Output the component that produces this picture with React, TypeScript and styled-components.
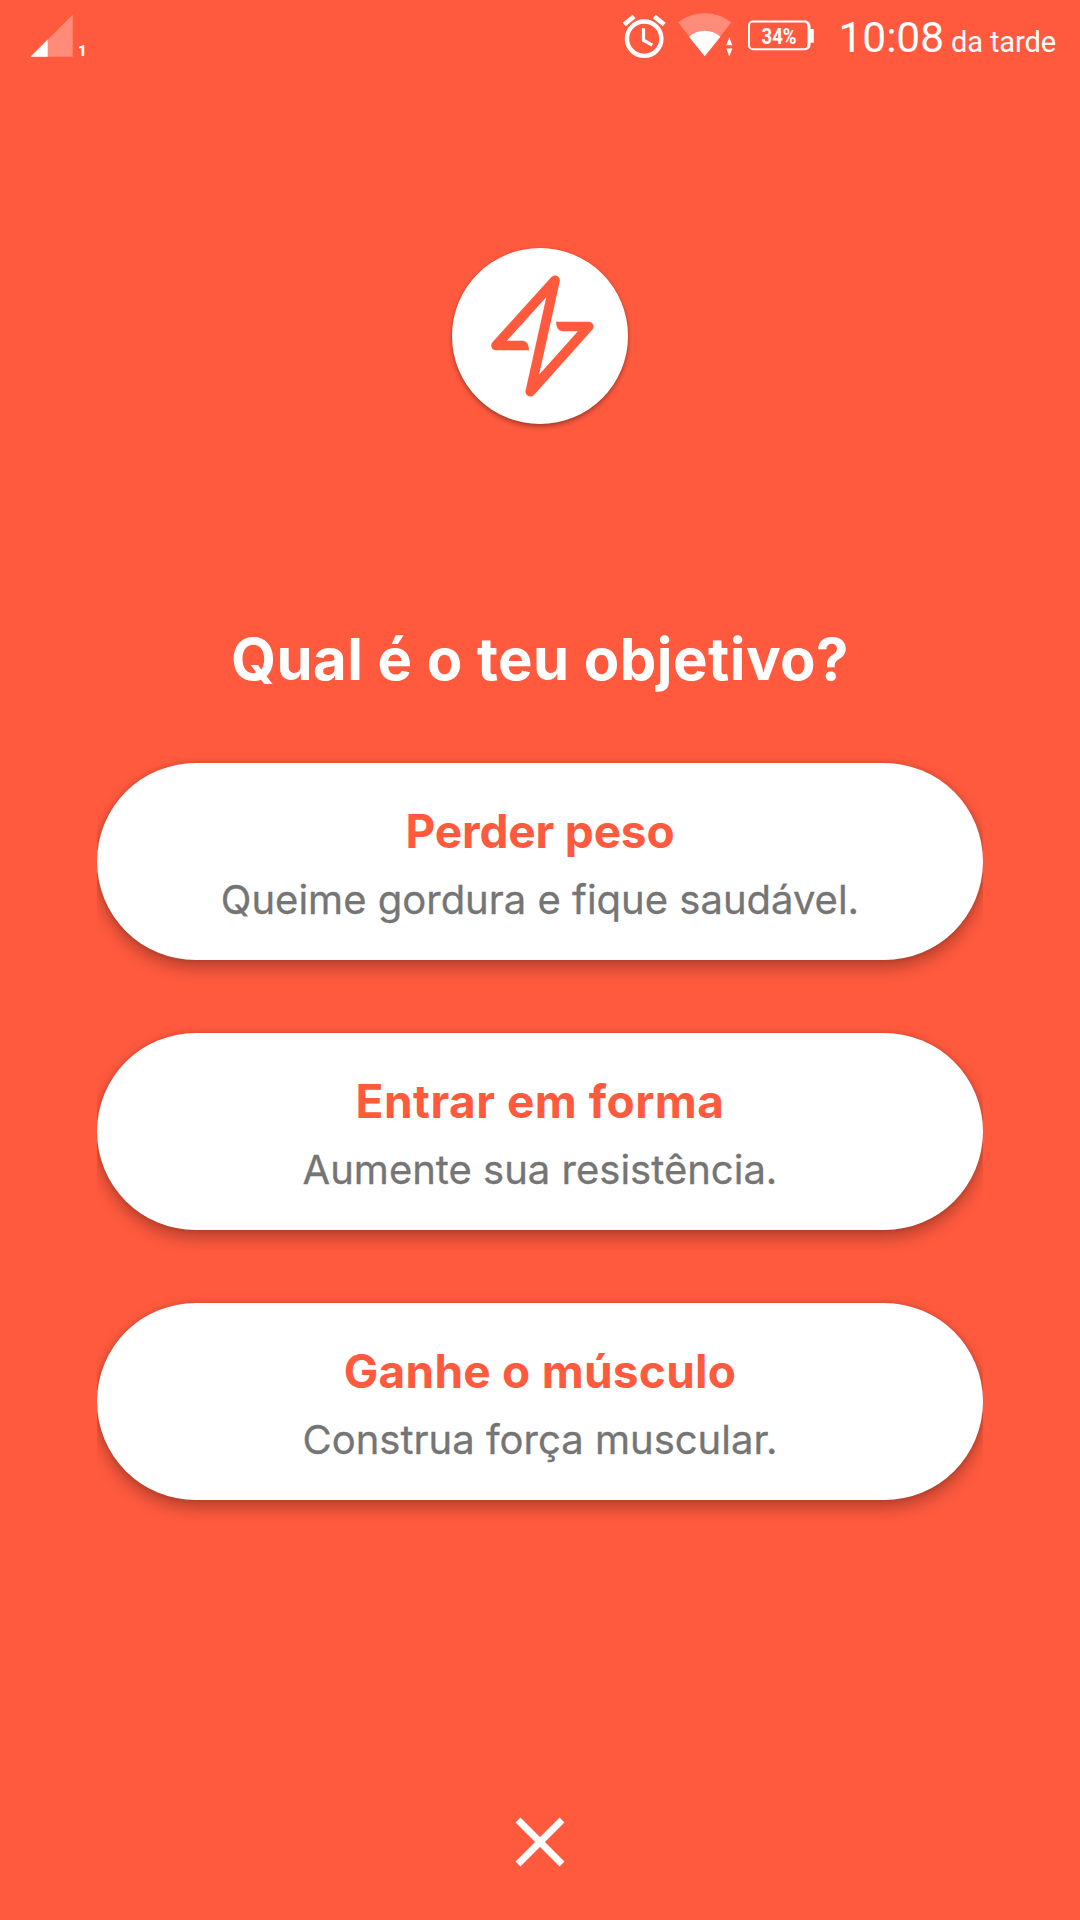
import React from 'react';
import styled, { createGlobalStyle } from 'styled-components';

const CORAL = '#ff5a3e';

const GlobalStyle = createGlobalStyle`
  *, *::before, *::after { box-sizing: border-box; }
  body { margin: 0; background: ${CORAL}; }
`;

const Screen = styled.div`
  display: flex;
  flex-direction: column;
  align-items: center;
  width: 1080px;
  height: 1920px;
  overflow: hidden;
  background: ${CORAL};
  font-family: Inter, 'Liberation Sans', sans-serif;
`;

const StatusBar = styled.header`
  display: flex;
  justify-content: space-between;
  width: 100%;
  height: 76px;
  padding: 0 24px 0 30px;
  color: #fff;
  font-family: Roboto, 'Liberation Sans', sans-serif;
`;

const StatusGroup = styled.div<{ $gap: number }>`
  display: flex;
  gap: ${({ $gap }) => $gap}px;
`;

const StatusIcon = styled.svg`
  display: block;
  flex: none;
  height: 76px;
`;

const SimNumber = styled.span`
  padding-top: 42px;
  font-size: 15px;
  font-weight: 900;
  line-height: 18px;
`;

const Clock = styled.div`
  display: flex;
  align-items: baseline;
  gap: 7px;
  height: 50px;
  margin: 13px 0 0 12px;
  font-size: 42.5px;
  line-height: 50px;
  letter-spacing: -0.1px;
  white-space: nowrap;
`;

const Period = styled.span`
  font-size: 29px;
`;

const Logo = styled.div`
  flex: none;
  width: 176px;
  height: 176px;
  margin-top: 172px;
  border-radius: 50%;
  background: #fff;
  box-shadow: 0 3px 5px rgba(0, 0, 0, 0.3), 0 0 3px rgba(0, 0, 0, 0.1);
`;

const LogoMark = styled.svg`
  display: block;
  width: 176px;
  height: 176px;
`;

const Question = styled.h1<{ $tracking: number }>`
  margin: 200px 0 0;
  color: #fff;
  font-size: 58px;
  font-weight: 700;
  line-height: 70px;
  letter-spacing: ${({ $tracking }) => $tracking}px;
  white-space: nowrap;
`;

const Goals = styled.main`
  display: flex;
  flex-direction: column;
  gap: 73px;
  margin-top: 69px;
`;

const GoalCard = styled.button`
  display: flex;
  flex-direction: column;
  align-items: center;
  width: 886px;
  height: 197px;
  padding: 40px 0 0;
  border: 0;
  border-radius: 99px;
  background: #fff;
  box-shadow: 0 8px 16px rgba(0, 0, 0, 0.28), 0 0 5px rgba(0, 0, 0, 0.16);
  clip-path: inset(-20px 0 -40px);
  font-family: inherit;
  white-space: nowrap;
`;

const GoalTitle = styled.span<{ $tracking: number }>`
  color: ${CORAL};
  font-size: 46px;
  font-weight: 700;
  line-height: 56px;
  letter-spacing: ${({ $tracking }) => $tracking}px;
`;

const GoalText = styled.span`
  margin-top: 17px;
  color: #757575;
  font-size: 40px;
  line-height: 48px;
  -webkit-text-stroke: 0.3px #757575;
`;

const CloseButton = styled.button`
  display: flex;
  width: 60px;
  height: 60px;
  margin-top: 312px;
  padding: 0;
  border: 0;
  background: none;
`;

const goals = [
  { title: 'Perder peso', text: 'Queime gordura e fique saudável.', tracking: -0.16 },
  { title: 'Entrar em forma', text: 'Aumente sua resistência.', tracking: 0.5 },
  { title: 'Ganhe o músculo', text: 'Construa força muscular.', tracking: 0.25 },
];

const SignalIcon = () => (
  <StatusIcon width="44" viewBox="30 0 44 76">
    <path d="M30.5 56.7 72.7 14.8V56.7Z" fill="#fff" fillOpacity=".3" />
    <path d="M30.5 56.7 47.7 39.6V56.7Z" fill="#fff" />
  </StatusIcon>
);

const AlarmIcon = () => (
  <StatusIcon width="44" viewBox="623.5 0 44 76" fill="none" stroke="#fff">
    <circle cx="645.7" cy="38.7" r="17.2" strokeWidth="4.4" />
    <path d="M645 28.3V40.2L653.8 45.2" strokeWidth="3.2" />
    <path d="M625.7 24.6 635.6 16.4M655.8 16.4 665.7 24.6" strokeWidth="4.6" />
  </StatusIcon>
);

const WifiIcon = () => (
  <StatusIcon width="57" viewBox="679 0 57 76" fill="#fff">
    <path d="M705.7 56.3 679 22.2A44 44 0 0 1 732.3 22.2Z" fillOpacity=".3" />
    <path d="M705.7 56.3 690 36.8A23.5 23.5 0 0 1 721.4 36.8Z" />
    <path d="M730.3 37.3 733.3 45.2H727.3ZM727.3 48.6H733.3L730.3 56.5Z" />
  </StatusIcon>
);

const BatteryIcon = () => (
  <StatusIcon width="68" viewBox="747 0 68 76">
    <rect x="749" y="21.6" width="59.5" height="27.6" rx="4" fill="none" stroke="#fff" strokeWidth="2" />
    <path d="M804 20.6Q810.6 21 810.6 27V29H813.8V42.8H810.6V44Q810.6 50 804 50.2Q808 47 808 42V29Q808 24 804 20.6Z" fill="#fff" />
    <text x="761.5" y="43.9" fontSize="22" fontWeight="700" fill="#fff" textLength="35" lengthAdjust="spacingAndGlyphs">
      34%
    </text>
  </StatusIcon>
);

export default function App() {
  return (
    <>
      <GlobalStyle />
      <Screen>
        <StatusBar>
          <StatusGroup $gap={4}>
            <SignalIcon />
            <SimNumber>1</SimNumber>
          </StatusGroup>
          <StatusGroup $gap={12}>
            <AlarmIcon />
            <WifiIcon />
            <BatteryIcon />
            <Clock>
              <span>10:08</span>
              <Period>da tarde</Period>
            </Clock>
          </StatusGroup>
        </StatusBar>

        <Logo>
          <LogoMark viewBox="36 36 528 528">
            <path
              d="M250 328.5H168L345 133 271 467 446 271.5H366"
              fill="none"
              stroke={CORAL}
              strokeWidth="29"
              strokeLinejoin="round"
            />
            <path d="M248 314Q267 316 267 343H248ZM368 257H348Q349 284 368 286Z" fill={CORAL} />
          </LogoMark>
        </Logo>

        <Question $tracking={0.45}>Qual é o teu objetivo?</Question>

        <Goals>
          {goals.map((goal) => (
            <GoalCard key={goal.title}>
              <GoalTitle $tracking={goal.tracking}>{goal.title}</GoalTitle>
              <GoalText>{goal.text}</GoalText>
            </GoalCard>
          ))}
        </Goals>

        <CloseButton aria-label="Fechar">
          <svg width="60" height="60" viewBox="0 0 60 60">
            <path d="M8 8 52 52M52 8 8 52" stroke="#fff" strokeWidth="6.8" />
          </svg>
        </CloseButton>
      </Screen>
    </>
  );
}
